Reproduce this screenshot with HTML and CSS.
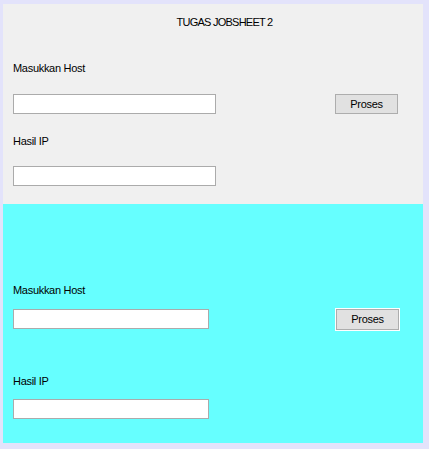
FILE: index.html
```html
<!DOCTYPE html>
<html>
<head>
<meta charset="utf-8">
<link rel="stylesheet" href="styles.css">
</head>
<body>
<div class="panel">
  <section class="sec sec-top">
    <div class="title">TUGAS JOBSHEET 2</div>
    <div class="label label-host">Masukkan Host</div>
    <div class="row row-top">
      <input class="field field-wide" type="text">
      <button class="btn btn-top">Proses</button>
    </div>
    <div class="label label-ip">Hasil IP</div>
    <div class="row row-ip">
      <input class="field field-wide" type="text">
    </div>
  </section>
  <section class="sec sec-bottom">
    <div class="label">Masukkan Host</div>
    <div class="row row-bottom">
      <input class="field field-narrow field-offset" type="text">
      <button class="btn btn-bottom">Proses</button>
    </div>
    <div class="label label-ip2">Hasil IP</div>
    <div class="row row-ip2">
      <input class="field field-narrow" type="text">
    </div>
  </section>
</div>
</body>
</html>
```
FILE: styles.css
```css
html, body {
  margin: 0;
}
body {
  background: #e3e3fb;
  padding: 4px 6px 6px 3px;
  font-family: "Liberation Sans", Arial, sans-serif;
  font-size: 11px;
  letter-spacing: -0.3px;
  color: #000;
}
.panel {
  width: 420px;
  height: 439px;
  display: flex;
  flex-direction: column;
}
.sec {
  box-sizing: border-box;
  padding-left: 10px;
}
.sec-top {
  height: 200px;
  background: #f0f0f0;
}
.sec-bottom {
  height: 239px;
  background: #66ffff;
  padding-top: 80px;
}
.title {
  margin-top: 12px;
  padding-left: 13px;
  text-align: center;
  line-height: 13px;
  letter-spacing: -0.75px;
}
.label {
  line-height: 13px;
}
.label-host { margin-top: 33px; }
.label-ip { margin-top: 21px; }
.label-ip2 { margin-top: 44px; }
.row {
  display: flex;
  align-items: flex-start;
}
.row-top { margin-top: 19px; }
.row-ip { margin-top: 18px; }
.row-bottom { margin-top: 11px; }
.row-ip2 { margin-top: 11px; }
.field {
  box-sizing: border-box;
  height: 20px;
  margin: 0;
  padding: 0;
  border: 1px solid #ababab;
  background: #fff;
  outline: none;
}
.field-wide { width: 203px; }
.field-narrow { width: 196px; }
.field-offset { margin-top: 1px; }
.btn {
  box-sizing: border-box;
  margin: 0;
  padding: 0;
  background: #e1e1e1;
  font-family: inherit;
  font-size: 11px;
  letter-spacing: -0.3px;
  color: #000;
  line-height: 13px;
}
.btn-top {
  margin-left: 119px;
  width: 63px;
  height: 20px;
  border: 1px solid #adadad;
}
.btn-bottom {
  margin-left: 126px;
  width: 65px;
  height: 23px;
  border: 1px solid #fff;
  box-shadow: inset 0 0 0 1px #adadad;
}
```
